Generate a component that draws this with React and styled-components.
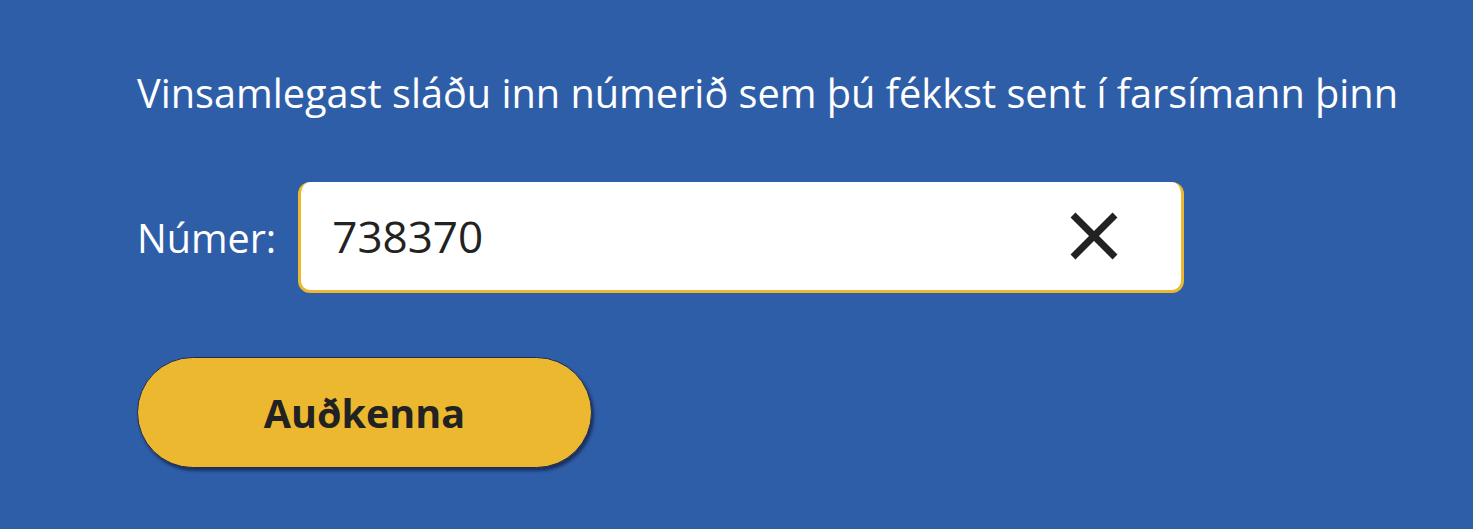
import React, { useState } from 'react';
import styled, { createGlobalStyle } from 'styled-components';

const GlobalStyle = createGlobalStyle`
  html, body {
    margin: 0;
    padding: 0;
    background: #2e5ea8;
    font-family: 'Open Sans', 'Noto Sans', sans-serif;
  }
`;

const Page = styled.main`
  width: 1473px;
  height: 529px;
  box-sizing: border-box;
  padding: 66px 0 0 137px;
  display: flex;
  flex-direction: column;
  background: #2e5ea8;
  color: #fff;
`;

const Intro = styled.p`
  margin: 0;
  font-size: 39.7px;
  line-height: 54px;
`;

const FieldRow = styled.div`
  display: flex;
  align-items: center;
  gap: 22px;
  margin-top: 62px;
`;

const Label = styled.label`
  font-size: 39.5px;
  color: #fff;
`;

const InputBox = styled.div`
  width: 886px;
  height: 111px;
  box-sizing: border-box;
  display: flex;
  align-items: center;
  background: #fff;
  border: 3px solid #ebb830;
  border-top-width: 0;
  border-radius: 12px;
  padding: 0 62px 0 31px;
`;

const Input = styled.input`
  flex: 1;
  border: none;
  outline: none;
  background: transparent;
  font-family: 'Open Sans', 'Noto Sans', sans-serif;
  font-size: 44px;
  color: #222;
  caret-color: #000;
  padding: 0;
`;

const ClearButton = styled.button`
  border: none;
  background: none;
  padding: 0;
  width: 50px;
  height: 50px;
  display: flex;
  align-items: center;
  justify-content: center;
  cursor: pointer;
`;

const SubmitButton = styled.button`
  margin-top: 64px;
  width: 455px;
  height: 111px;
  border-radius: 56px;
  background: #ebb830;
  border: 1px solid #1d2b55;
  box-shadow: 2px 3px 3px rgba(20, 30, 70, 0.7);
  font-family: 'Open Sans', 'Noto Sans', sans-serif;
  font-weight: 700;
  font-size: 39.5px;
  color: #222;
  cursor: pointer;
`;

const App = () => {
  const [value, setValue] = useState('738370');

  return (
    <>
      <GlobalStyle />
      <Page>
        <Intro>Vinsamlegast sláðu inn númerið sem þú fékkst sent í farsímann þinn</Intro>
        <FieldRow>
          <Label htmlFor='numer'>Númer:</Label>
          <InputBox>
            <Input id='numer' value={value} onChange={(e) => setValue(e.target.value)} autoFocus />
            <ClearButton onClick={() => setValue('')} aria-label='Hreinsa'>
              <svg width='50' height='50' viewBox='0 0 50 50'>
                <path d='M4 4 L46 46 M46 4 L4 46' stroke='#222' strokeWidth='7' />
              </svg>
            </ClearButton>
          </InputBox>
        </FieldRow>
        <SubmitButton>Auðkenna</SubmitButton>
      </Page>
    </>
  );
};

export default App;
